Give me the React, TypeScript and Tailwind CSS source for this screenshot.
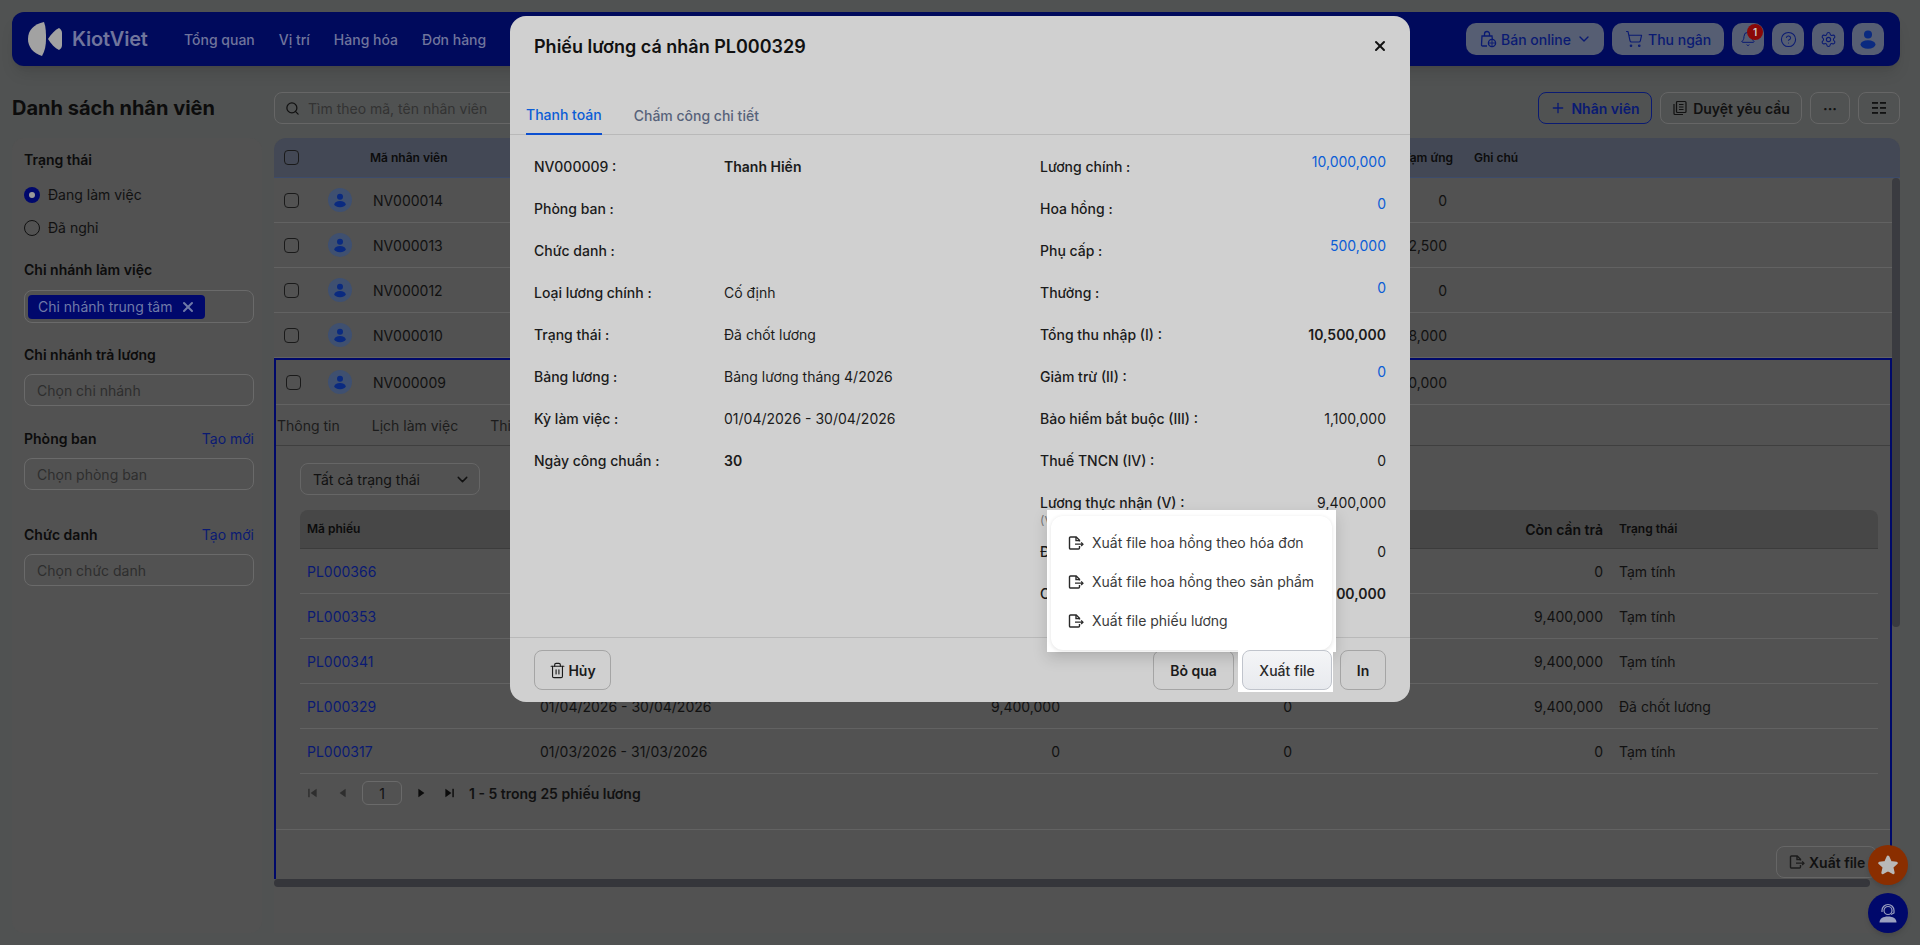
import { ReactNode } from "react";
import { Bell, ChevronDown, CircleHelp, Plus, Search, Settings, ShoppingCart, Trash2, X } from "lucide-react";

function PersonIcon({ size, color }: { size: number; color: string }) {
  return (
    <svg width={size} height={size} viewBox="0 0 24 24" fill={color}>
      <circle cx="12" cy="7.5" r="4" />
      <ellipse cx="12" cy="17.5" rx="7.5" ry="4.2" />
    </svg>
  );
}

function ExportIcon({ size = 16, color = "#1c1c1c" }: { size?: number; color?: string }) {
  return (
    <svg width={size} height={size} viewBox="0 0 16 16" fill="none" stroke={color} strokeWidth="1.4">
      <path d="M11.5 11v2a1 1 0 0 1-1 1H2.5a1 1 0 0 1-1-1V3a1 1 0 0 1 1-1h5.7l3.3 3.3V6.5" />
      <path d="M8 2v3.6h3.5" />
      <path d="M7 9.2h8M13.2 7.4 15 9.2 13.2 11" strokeWidth="1.2" />
    </svg>
  );
}

function BagIcon() {
  return (
    <svg width="18" height="18" viewBox="0 0 18 18" fill="none" stroke="#0a1a72" strokeWidth="1.3">
      <path d="M8 16H3.5a1 1 0 0 1-1-1.1L3 6h10l.3 3" />
      <path d="M5.5 6V4a2.5 2.5 0 0 1 5 0v2" />
      <circle cx="13" cy="13" r="3.6" />
      <path d="M13 9.4v7.2M9.4 13h7.2" strokeWidth="0.9" />
    </svg>
  );
}

function ApproveIcon() {
  return (
    <svg width="16" height="16" viewBox="0 0 16 16" fill="none" stroke="#111" strokeWidth="1.2">
      <rect x="4.5" y="1.5" width="9.5" height="11" rx="1" />
      <path d="M2 4v9.5a1 1 0 0 0 1 1h8" />
      <path d="M7 4.5h4.5M7 7h4.5M7 9.5h4.5" />
    </svg>
  );
}

function ColumnsIcon() {
  return (
    <svg width="16" height="14" viewBox="0 0 16 14" fill="#111">
      <rect x="1" y="1" width="6" height="1.8" />
      <rect x="9" y="1" width="6" height="1.8" />
      <rect x="1" y="6" width="6" height="1.8" />
      <rect x="9" y="6" width="6" height="1.8" />
      <rect x="1" y="11" width="6" height="1.8" />
      <rect x="9" y="11" width="6" height="1.8" />
    </svg>
  );
}

function PageArrow({ dir, bar, color }: { dir: "l" | "r"; bar?: boolean; color: string }) {
  return (
    <svg width="12" height="12" viewBox="0 0 10 10" fill={color}>
      {dir === "l" ? <path d="M8 1.5v7L3 5z" /> : <path d="M2 1.5v7L7 5z" />}
      {bar && (dir === "l" ? <rect x="1" y="1.5" width="1.2" height="7" /> : <rect x="7.8" y="1.5" width="1.2" height="7" />)}
    </svg>
  );
}

function Checkbox() {
  return <span className="block h-[15px] w-[15px] rounded-[4px] border border-[#1a1a1a]" />;
}

const navItems = ["Tổng quan", "Vị trí", "Hàng hóa", "Đơn hàng"];

function NavBar() {
  return (
    <header className="ml-3 mr-5 mt-3 flex h-[54px] items-center rounded-xl bg-[#000a5c] pl-4 pr-4 shadow-lg">
      <svg width="34" height="34" viewBox="0 0 34 34" fill="#a2a2a2">
        <path d="M16 0C6 2 0 8 0 17c0 8 5 14 14 17 3-5 4-11 4-17S18 5 16 0z" />
        <path d="M31 6c2 1 3 3 3 5v12c0 2-1 4-3 5-4-2-8-6-11-11 3-5 7-9 11-11z" />
      </svg>
      <span className="ml-[10px] w-[112px] text-[20px] font-semibold tracking-[-0.2px] text-[#70759c]">KiotViet</span>
      <nav className="flex gap-6">
        {navItems.map((item) => (
          <span key={item} className="text-[14px] font-medium text-[#70759c]">
            {item}
          </span>
        ))}
      </nav>
      <div className="ml-auto flex items-center gap-2">
        <button className="flex h-8 w-[138px] items-center gap-1 rounded-[10px] bg-[#565e73] pl-[13px] text-[14px] font-medium text-[#0a1a72]">
          <BagIcon />
          Bán online
          <ChevronDown size={16} className="ml-[1px]" />
        </button>
        <button className="flex h-8 w-[112px] items-center gap-[5px] rounded-[10px] bg-[#565e73] pl-[13px] text-[14px] font-medium text-[#0a1a72]">
          <ShoppingCart size={18} strokeWidth={1.5} />
          Thu ngân
        </button>
        <button className="relative flex h-8 w-8 items-center justify-center rounded-[10px] bg-[#565e73] text-[#0a1a72]">
          <Bell size={16} strokeWidth={1.5} />
          <span className="absolute right-[1px] top-[1px] flex h-4 w-4 items-center justify-center rounded-full bg-[#8a0808] text-[10px] font-semibold text-[#ccc]">
            1
          </span>
        </button>
        <button className="flex h-8 w-8 items-center justify-center rounded-[10px] bg-[#565e73] text-[#0a1a72]">
          <CircleHelp size={17} strokeWidth={1.5} />
        </button>
        <button className="flex h-8 w-8 items-center justify-center rounded-[10px] bg-[#565e73] text-[#0a1a72]">
          <Settings size={17} strokeWidth={1.5} />
        </button>
        <button className="flex h-8 w-8 items-center justify-center rounded-[10px] bg-[#565e73]">
          <PersonIcon size={24} color="#0a2a80" />
        </button>
      </div>
    </header>
  );
}

function Toolbar() {
  return (
    <div className="ml-3 mr-5 mt-[26px] flex h-8 items-center">
      <h1 className="w-[262px] text-[20px] font-bold text-[#0c0c0c]">Danh sách nhân viên</h1>
      <div className="flex h-8 w-[760px] items-center gap-2 rounded-lg border border-[#666] px-2.5 text-[14px] text-[#333]">
        <Search size={15} className="text-[#111]" />
        Tìm theo mã, tên nhân viên
      </div>
      <div className="ml-auto flex items-center gap-2">
        <button className="flex h-8 w-[114px] items-center justify-center gap-[5px] rounded-lg border border-[#0a1a72] text-[14px] font-semibold text-[#0a1a72]">
          <Plus size={16} />
          Nhân viên
        </button>
        <button className="flex h-8 w-[142px] items-center justify-center gap-[5px] rounded-lg border border-[#666] text-[14px] font-semibold text-[#111]">
          <ApproveIcon />
          Duyệt yêu cầu
        </button>
        <button className="flex h-8 w-10 items-center justify-center rounded-lg border border-[#666] text-[14px] font-bold text-[#111]">
          ···
        </button>
        <button className="flex h-8 w-[42px] items-center justify-center rounded-lg border border-[#666]">
          <ColumnsIcon />
        </button>
      </div>
    </div>
  );
}

function FieldLabel({ children, link }: { children: ReactNode; link?: boolean }) {
  return (
    <div className="flex items-center justify-between text-[14px] font-semibold text-[#0c0c0c]">
      {children}
      {link && <span className="font-normal text-[#0a1a72]">Tạo mới</span>}
    </div>
  );
}

function InputBox({ text }: { text: string }) {
  return (
    <div className="mt-[9px] flex h-8 items-center rounded-lg border border-[#6a6a6a] px-3 text-[14px] text-[#2e2e2e]">
      {text}
    </div>
  );
}

function Sidebar() {
  return (
    <aside className="h-[795px] w-[250px] shrink-0 rounded-xl bg-[#525252] pl-3 pr-2 pt-[11px]">
      <FieldLabel>Trạng thái</FieldLabel>
      <div className="mt-[14px] flex items-center gap-2 text-[14px] text-[#111]">
        <span className="flex h-4 w-4 items-center justify-center rounded-full bg-[#00086c]">
          <span className="h-[6px] w-[6px] rounded-full bg-[#9a9a9a]" />
        </span>
        Đang làm việc
      </div>
      <div className="mt-[12px] flex items-center gap-2 text-[14px] text-[#111]">
        <span className="h-4 w-4 rounded-full border border-[#111]" />
        Đã nghỉ
      </div>
      <div className="mt-[21px]">
        <FieldLabel>Chi nhánh làm việc</FieldLabel>
      </div>
      <div className="mt-[10px] flex h-[33px] items-center rounded-lg border border-[#6a6a6a] px-[3px]">
        <span className="flex h-6 w-[177px] items-center gap-2 rounded-[4px] bg-[#00086c] pl-2.5 text-[14px] text-[#6f7aa8]">
          Chi nhánh trung tâm
          <X size={16} strokeWidth={3} />
        </span>
      </div>
      <div className="mb-px mt-[21px]">
        <FieldLabel>Chi nhánh trả lương</FieldLabel>
      </div>
      <InputBox text="Chọn chi nhánh" />
      <div className="mt-[22px]">
        <FieldLabel link>Phòng ban</FieldLabel>
      </div>
      <InputBox text="Chọn phòng ban" />
      <div className="mt-[34px]">
        <FieldLabel link>Chức danh</FieldLabel>
      </div>
      <InputBox text="Chọn chức danh" />
    </aside>
  );
}

const employees = [
  { code: "NV000014", amount: "0" },
  { code: "NV000013", amount: "2,500" },
  { code: "NV000012", amount: "0" },
  { code: "NV000010", amount: "8,000" },
];

function EmployeeCells({ code, amount, selected }: { code: string; amount: string; selected?: boolean }) {
  return (
    <>
      <span className={selected ? "w-[42px] shrink-0" : "w-[44px] shrink-0"}>
        <Checkbox />
      </span>
      <span className="flex h-6 w-6 shrink-0 items-center justify-center rounded-full bg-[#3f5070]">
        <PersonIcon size={18} color="#0a2a80" />
      </span>
      <span className="ml-[21px] flex-1">{code}</span>
      <span className="w-[200px] text-right">{amount}</span>
    </>
  );
}

const slips = [
  { code: "PL000366", period: "", paid: "", second: "", due: "0", status: "Tạm tính" },
  { code: "PL000353", period: "", paid: "", second: "", due: "9,400,000", status: "Tạm tính" },
  { code: "PL000341", period: "", paid: "", second: "", due: "9,400,000", status: "Tạm tính" },
  { code: "PL000329", period: "01/04/2026 - 30/04/2026", paid: "9,400,000", second: "0", due: "9,400,000", status: "Đã chốt lương" },
  { code: "PL000317", period: "01/03/2026 - 31/03/2026", paid: "0", second: "0", due: "0", status: "Tạm tính" },
];

function SlipTable() {
  return (
    <div className="mt-[15px] text-[14px] text-[#111]">
      <div className="flex h-[39px] items-center rounded-t-lg border-b border-[#3c3c3c] bg-[#474747] text-[#0c0c0c]">
        <span className="w-[241px] pl-[7px] text-[12px] font-semibold">Mã phiếu</span>
        <span className="w-[762px]" />
        <span className="w-[300px] text-right font-semibold">Còn cần trả</span>
        <span className="pl-4 text-[12px] font-semibold">Trạng thái</span>
      </div>
      {slips.map((s) => (
        <div key={s.code} className="flex h-[45px] items-center border-b border-[#626262]">
          <span className="w-[240px] pl-[7px] text-[#0a1a72]">{s.code}</span>
          <span className="w-[301px]">{s.period}</span>
          <span className="w-[219px] text-right">{s.paid}</span>
          <span className="w-[232px] text-right">{s.second}</span>
          <span className="w-[311px] text-right">{s.due}</span>
          <span className="pl-4">{s.status}</span>
        </div>
      ))}
    </div>
  );
}

function EmployeeDetail() {
  return (
    <section className="h-[521px] border-2 border-b-0 border-[#00096a] text-[14px] text-[#111]">
      <div className="flex h-[45px] items-center border-b border-[#626262] pl-[10px] pr-[443px]">
        <EmployeeCells code="NV000009" amount="0,000" selected />
      </div>
      <div className="flex h-[41px] items-center gap-[32px] border-b border-[#3f3f3f] pl-px text-[#1c1c1c]">
        <span>Thông tin</span>
        <span>Lịch làm việc</span>
        <span>Thiết lập lương</span>
      </div>
      <div className="pl-[24px] pr-[12px] pt-[17px]">
        <div className="flex h-8 w-[180px] items-center justify-between rounded-lg border border-[#666] pl-3 pr-2">
          Tất cả trạng thái
          <ChevronDown size={17} />
        </div>
        <SlipTable />
        <div className="flex h-[55px] items-start pt-[7px]">
          <div className="flex h-6 items-center">
            <span className="ml-[7px] w-[29px]">
              <PageArrow dir="l" bar color="#2e2e2e" />
            </span>
            <span className="w-[26px]">
              <PageArrow dir="l" color="#2e2e2e" />
            </span>
            <span className="flex h-6 w-10 items-center justify-center rounded-md border border-[#6a6a6a]">1</span>
            <span className="ml-[14px] w-[27px]">
              <PageArrow dir="r" color="#0c0c0c" />
            </span>
            <span className="w-[26px]">
              <PageArrow dir="r" bar color="#0c0c0c" />
            </span>
            <span className="font-semibold">1 - 5 trong 25 phiếu lương</span>
          </div>
        </div>
      </div>
      <div className="flex justify-end border-t border-[#626262] pr-[13px] pt-[16px]">
        <button className="flex h-8 w-[101px] items-center gap-1 rounded-lg border border-[#666] pl-3 font-semibold">
          <ExportIcon />
          Xuất file
        </button>
      </div>
    </section>
  );
}

function EmployeeTable() {
  return (
    <div className="relative min-w-0 flex-1 overflow-hidden rounded-t-xl bg-[#525252]">
      <div className="flex h-10 items-center border-b border-[#3c4b6b] bg-[#434855] pl-[10px] text-[12px] font-semibold text-[#0c0c0c]">
        <Checkbox />
        <span className="ml-[71px] flex-1">Mã nhân viên</span>
        <span className="w-[100px] text-right text-[12px]">Tạm ứng</span>
        <span className="ml-[21px] w-[426px]">Ghi chú</span>
      </div>
      <div className="flex">
        <div className="w-[1618px]">
          {employees.map((e) => (
            <div key={e.code} className="flex h-[45px] items-center border-b border-[#626262] pl-[10px] pr-[445px] text-[14px] text-[#111]">
              <EmployeeCells code={e.code} amount={e.amount} />
            </div>
          ))}
          <EmployeeDetail />
        </div>
        <div className="h-[449px] w-2 rounded-full bg-[#3a3b40]" />
      </div>
      <div className="h-2 w-[1596px] rounded-full bg-[#35363b]" />
    </div>
  );
}

function SalaryRow({ label, value, bold, blue }: { label: string; value?: string; bold?: boolean; blue?: boolean }) {
  return (
    <div className="flex h-[42px] items-center justify-between">
      <span className="font-medium">{label}</span>
      {value && (
        <span className={blue ? "mb-[10px] text-[#0b5dd6]" : bold ? "font-semibold" : ""}>{value}</span>
      )}
    </div>
  );
}

const leftInfo: { label: string; value?: string; bold?: boolean }[] = [
  { label: "NV000009 :", value: "Thanh Hiền", bold: true },
  { label: "Phòng ban :" },
  { label: "Chức danh :" },
  { label: "Loại lương chính :", value: "Cố định" },
  { label: "Trạng thái :", value: "Đã chốt lương" },
  { label: "Bảng lương :", value: "Bảng lương tháng 4/2026" },
  { label: "Kỳ làm việc :", value: "01/04/2026 - 30/04/2026" },
  { label: "Ngày công chuẩn :", value: "30", bold: true },
];

function SalaryModal() {
  return (
    <div className="absolute left-[510px] top-4 flex h-[686px] w-[900px] flex-col rounded-2xl bg-[#d0d0d0] text-[14px] text-[#1b1b1b]">
      <div className="flex h-[60px] items-center justify-between pl-6 pr-[22px]">
        <h2 className="text-[18px] font-semibold text-[#111]">Phiếu lương cá nhân PL000329</h2>
        <X size={16} strokeWidth={3} className="text-[#111]" />
      </div>
      <div className="mt-[19px] flex h-[40px] gap-[32px] border-b border-[#b9b9b9] pl-4">
        <span className="flex h-[40px] items-center border-b-2 border-[#0b4fd0] font-medium text-[#0b5dd6]">Thanh toán</span>
        <span className="flex h-[40px] items-center font-medium text-[#57627a]">Chấm công chi tiết</span>
      </div>
      <div className="flex flex-1 pl-6 pr-6 pt-[10px]">
        <div className="w-[506px]">
          {leftInfo.map((row) => (
            <div key={row.label} className="flex h-[42px] items-center">
              <span className="w-[190px] font-medium">{row.label}</span>
              <span className={row.bold ? "font-semibold" : ""}>{row.value}</span>
            </div>
          ))}
        </div>
        <div className="flex-1">
          <SalaryRow label="Lương chính :" value="10,000,000" blue />
          <SalaryRow label="Hoa hồng :" value="0" blue />
          <SalaryRow label="Phụ cấp :" value="500,000" blue />
          <SalaryRow label="Thưởng :" value="0" blue />
          <SalaryRow label="Tổng thu nhập (I) :" value="10,500,000" bold />
          <SalaryRow label="Giảm trừ (II) :" value="0" blue />
          <SalaryRow label="Bảo hiểm bắt buộc (III) :" value="1,100,000" />
          <SalaryRow label="Thuế TNCN (IV) :" value="0" />
          <div className="relative mb-[7px]">
            <SalaryRow label="Lương thực nhận (V) :" value="9,400,000" />
            <span className="absolute left-0 top-[31px] text-[12px] text-[#777]">(V) = (I) - (II) - (III) - (IV)</span>
          </div>
          <SalaryRow label="Đã trả :" value="0" />
          <SalaryRow label="Còn cần trả :" value="9,400,000" bold />
        </div>
      </div>
      <div className="flex h-[65px] items-start justify-between border-t border-[#b9b9b9] pl-6 pr-6 pt-[12px]">
        <button className="flex h-10 w-[77px] items-center justify-center gap-[2px] rounded-lg border border-[#a5a5a5] font-semibold">
          <Trash2 size={17} strokeWidth={1.6} />
          Hủy
        </button>
        <div className="flex gap-2">
          <button className="h-10 w-[81px] rounded-lg border border-[#a5a5a5] font-semibold">Bỏ qua</button>
          <span className="w-[90px]" />
          <button className="h-10 w-[46px] rounded-lg border border-[#a5a5a5] font-semibold">In</button>
        </div>
      </div>
    </div>
  );
}

const exportItems = ["Xuất file hoa hồng theo hóa đơn", "Xuất file hoa hồng theo sản phẩm", "Xuất file phiếu lương"];

function ExportMenu() {
  return (
    <>
      <div className="absolute left-[1047px] top-[510px] h-[142px] w-[289px] bg-white p-[4px] pt-[6px] shadow-[0_6px_14px_rgba(0,0,0,0.15)]">
        <div className="flex h-[134px] flex-col rounded-xl bg-white pt-[7px] shadow-[0_1px_4px_rgba(0,0,0,0.12)]">
          {exportItems.map((item) => (
            <div key={item} className="flex h-[39px] items-center gap-2 pl-[17px] text-[14px] text-[#3a3a3a]">
              <ExportIcon color="#2a2a2a" />
              {item}
            </div>
          ))}
        </div>
      </div>
      <div className="absolute left-[1238px] top-[650px] flex h-[42px] w-[95px] justify-end bg-white pr-[1px]">
        <button className="h-10 w-[90px] rounded-lg border border-[#c0c4cc] bg-gradient-to-b from-[#f4f5f7] to-[#e8eaee] text-[14px] font-medium text-[#2a2a2a]">
          Xuất file
        </button>
      </div>
    </>
  );
}

export default function App() {
  return (
    <div className="relative h-[945px] w-[1920px] overflow-hidden bg-[#505252] [font-family:Inter,sans-serif]">
      <NavBar />
      <Toolbar />
      <main className="ml-3 mr-5 mt-[14px] flex gap-3">
        <Sidebar />
        <EmployeeTable />
      </main>
      <SalaryModal />
      <ExportMenu />
      <button className="absolute left-[1868px] top-[845px] flex h-10 w-10 items-center justify-center rounded-full bg-[#8a2e00] shadow-md">
        <svg width="26" height="26" viewBox="0 0 24 24" fill="#b9b9b9" stroke="#b9b9b9" strokeWidth="2.5" strokeLinejoin="round">
          <path d="M12 4.5 14.3 9.6 19.8 10.2 15.7 13.9 16.9 19.3 12 16.5 7.1 19.3 8.3 13.9 4.2 10.2 9.7 9.6z" />
        </svg>
      </button>
      <button className="absolute left-[1868px] top-[893px] flex h-10 w-10 items-center justify-center rounded-full bg-[#00086b] shadow-md">
        <svg width="24" height="24" viewBox="0 0 24 24" fill="none" stroke="#9aa0c0" strokeWidth="1.2">
          <circle cx="12" cy="9.5" r="4" />
          <path d="M6 11V9.5a6 6 0 0 1 12 0V12l-3 1.5" />
          <path d="M3.5 21.5c0-4 3.5-6 8.5-6s8.5 2 8.5 6z" fill="#9aa0c0" stroke="none" />
        </svg>
      </button>
    </div>
  );
}
